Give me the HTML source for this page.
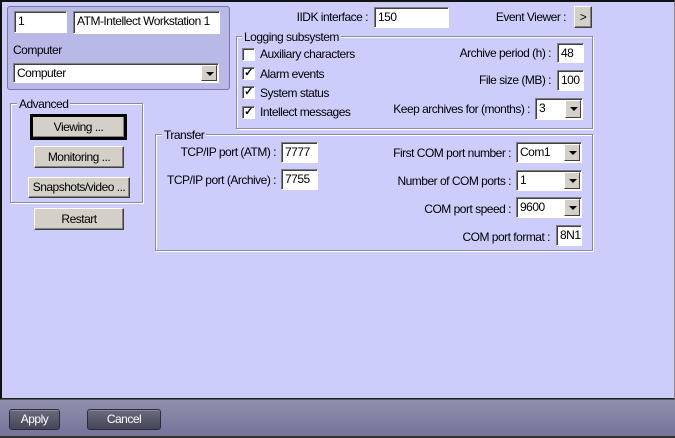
<!DOCTYPE html>
<html><head><meta charset="utf-8"><style>
*{box-sizing:border-box;margin:0;padding:0}
body{width:675px;height:438px;overflow:hidden;background:#cdcdfb;font-family:"Liberation Sans",sans-serif;font-size:12px;letter-spacing:-0.5px;color:#000;position:relative}
.a{position:absolute}
#main{left:0;top:0;width:675px;height:400px;border:2px solid #111;border-right:1px solid #888;border-bottom:2px solid #222;background:#cdcdfb}
#foot{left:0;top:399px;width:675px;height:39px;background:linear-gradient(#9090ac,#73739a);border-top:1px solid #555;border-bottom:2px solid #333}
.in{position:absolute;background:#fff;border:1px solid;border-color:#808080 #fff #fff #808080;box-shadow:inset 1px 1px 0 #404040;padding:2px 0 0 3px;font-size:12px;white-space:nowrap;overflow:hidden}
.cb .arr{position:absolute;right:1px;top:1px;bottom:1px;width:16px;background:#d4d0c8;border:1px solid;border-color:#fff #404040 #404040 #fff}
.cb .arr:after{content:"";position:absolute;left:4px;top:6px;border:4px solid transparent;border-top:4px solid #000;border-bottom:0}
.btn{position:absolute;background:#d4d0c8;border:1px solid;border-color:#fff #404040 #404040 #fff;box-shadow:inset -1px -1px 0 #808080;text-align:center;font-size:12px;white-space:nowrap}
.grp{position:absolute;border:1px solid #8a8aa0;box-shadow:1px 1px 0 #fff inset,1px 1px 0 #fff}
.gl{position:absolute;background:#cdcdfb;padding:0 2px;font-size:12px;line-height:12px}
.lbl{position:absolute;white-space:nowrap;font-size:12px;line-height:14px}
.r{text-align:right}
.chk{position:absolute;width:13px;height:13px;background:#fff;border:1px solid;border-color:#808080 #fff #fff #808080;box-shadow:inset 1px 1px 0 #404040;font-size:11px;line-height:11px;text-align:center;font-weight:bold}
.fb{position:absolute;top:409px;height:21px;border-radius:3px;border:1px solid #2a2a3a;background:linear-gradient(#6a6a7c,#46465a);color:#fff;text-align:center;font-size:12px;line-height:19px;box-shadow:inset 0 1px 0 #8888a0}
</style></head><body>
<div id="main" class="a"></div>
<div class="a" style="left:7px;top:6px;width:223px;height:84px;background:#b9b9e8;border:1px solid #7878a0;border-radius:3px"></div>
<div class="in" style="left:14px;top:11px;width:53px;height:22px">1</div>
<div class="in" style="left:73px;top:11px;width:147px;height:23px">ATM-Intellect Workstation 1</div>
<div class="lbl" style="left:13px;top:43px">Computer</div>
<div class="in cb" style="left:13px;top:63px;width:206px;height:20px">Computer<span class="arr"></span></div>

<div class="grp" style="left:10px;top:103px;width:133px;height:100px"></div>
<div class="gl" style="left:17px;top:98px">Advanced</div>
<div class="btn" style="left:30px;top:114px;width:97px;height:26px;border:3px solid #000;line-height:20px">Viewing ...</div>
<div class="btn" style="left:34px;top:146px;width:90px;height:22px;line-height:20px">Monitoring ...</div>
<div class="btn" style="left:28px;top:177px;width:102px;height:21px;line-height:19px">Snapshots/video ...</div>
<div class="btn" style="left:34px;top:208px;width:90px;height:22px;line-height:20px">Restart</div>

<div class="lbl r" style="left:260px;top:10px;width:108px">IIDK interface :</div>
<div class="in" style="left:374px;top:7px;width:75px;height:21px">150</div>
<div class="lbl r" style="left:470px;top:10px;width:96px">Event Viewer :</div>
<div class="btn" style="left:574px;top:6px;width:18px;height:22px;line-height:20px">&gt;</div>

<div class="grp" style="left:236px;top:36px;width:357px;height:93px"></div>
<div class="gl" style="left:242px;top:31px">Logging subsystem</div>
<div class="chk" style="left:242px;top:48px"></div><div class="lbl" style="left:260px;top:47px">Auxiliary characters</div>
<div class="chk" style="left:242px;top:67px">✓</div><div class="lbl" style="left:260px;top:67px">Alarm events</div>
<div class="chk" style="left:242px;top:86px">✓</div><div class="lbl" style="left:260px;top:86px">System status</div>
<div class="chk" style="left:242px;top:106px">✓</div><div class="lbl" style="left:260px;top:105px">Intellect messages</div>
<div class="lbl r" style="left:400px;top:46px;width:151px">Archive period (h) :</div>
<div class="in" style="left:557px;top:43px;width:27px;height:20px">48</div>
<div class="lbl r" style="left:400px;top:73px;width:151px">File size (MB) :</div>
<div class="in" style="left:557px;top:70px;width:27px;height:21px">100</div>
<div class="lbl r" style="left:360px;top:102px;width:170px">Keep archives for (months) :</div>
<div class="in cb" style="left:535px;top:98px;width:48px;height:22px">3<span class="arr"></span></div>

<div class="grp" style="left:155px;top:134px;width:438px;height:117px"></div>
<div class="gl" style="left:162px;top:129px">Transfer</div>
<div class="lbl r" style="left:160px;top:145px;width:116px">TCP/IP port (ATM) :</div>
<div class="in" style="left:281px;top:142px;width:37px;height:21px">7777</div>
<div class="lbl r" style="left:150px;top:173px;width:126px">TCP/IP port (Archive) :</div>
<div class="in" style="left:281px;top:169px;width:37px;height:21px">7755</div>
<div class="lbl r" style="left:360px;top:146px;width:151px">First COM port number :</div>
<div class="in cb" style="left:516px;top:142px;width:66px;height:21px">Com1<span class="arr"></span></div>
<div class="lbl r" style="left:360px;top:174px;width:151px">Number of COM ports :</div>
<div class="in cb" style="left:516px;top:170px;width:66px;height:21px">1<span class="arr"></span></div>
<div class="lbl r" style="left:360px;top:202px;width:151px">COM port speed :</div>
<div class="in cb" style="left:516px;top:197px;width:66px;height:21px">9600<span class="arr"></span></div>
<div class="lbl r" style="left:400px;top:230px;width:150px">COM port format :</div>
<div class="in" style="left:556px;top:225px;width:26px;height:21px">8N1</div>

<div id="foot" class="a"></div>
<div class="fb" style="left:9px;width:51px">Apply</div>
<div class="fb" style="left:87px;width:74px">Cancel</div>
</body></html>
